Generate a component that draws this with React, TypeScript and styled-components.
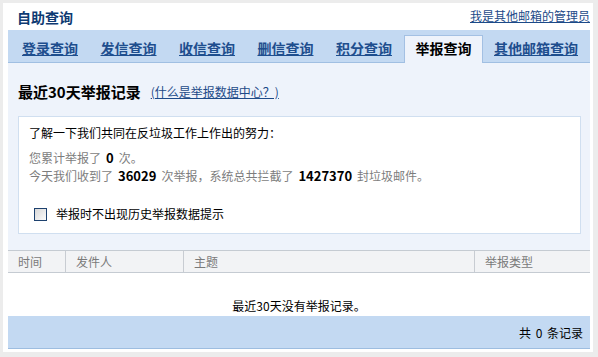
import React from 'react';
import styled, { createGlobalStyle } from 'styled-components';

const GlobalStyle = createGlobalStyle`
  html, body {
    margin: 0;
    padding: 0;
    background: #ececec;
  }
  body {
    font-family: "Noto Sans CJK SC", "Liberation Sans", sans-serif;
    font-size: 12px;
    color: #000;
  }
`;

const Page = styled.div`
  width: 598px;
  height: 357px;
  padding: 3px 5px 5px 3px;
  box-sizing: border-box;
`;

const Panel = styled.div`
  width: 590px;
  height: 349px;
  background: #fff;
  padding: 0 3px 3px 5px;
  box-sizing: border-box;
  display: flex;
  flex-direction: column;
`;

const Header = styled.div`
  height: 27px;
  display: flex;
  align-items: center;
  justify-content: space-between;
  padding-left: 9px;
  .title {
    font-size: 14px;
    font-weight: bold;
    color: #0e3a72;
  }
  a {
    color: #1c4a88;
    text-decoration: underline;
    font-size: 12px;
    margin-top: -2px;
  }
`;

const TabBar = styled.div`
  height: 33px;
  box-sizing: border-box;
  background: #c3d9f2;
  border-bottom: 1px solid #a0bfe2;
  display: flex;
  align-items: flex-end;
  padding-left: 3px;
`;

const Tab = styled.a<{ $active?: boolean }>`
  height: 28px;
  box-sizing: border-box;
  margin-bottom: -1px;
  padding: ${(p) => (p.$active ? '0 10px 0 11px' : '1px 11px 0')};
  margin-right: 0.5px;
  line-height: 25px;
  font-size: 14px;
  font-weight: bold;
  white-space: nowrap;
  color: ${(p) => (p.$active ? '#000' : '#1e4e8e')};
  text-decoration: ${(p) => (p.$active ? 'none' : 'underline')};
  background: ${(p) => (p.$active ? '#eef3fb' : 'transparent')};
  border: ${(p) => (p.$active ? '1px solid #a3c0e3' : 'none')};
  border-bottom: none;
`;

const Content = styled.div`
  background: #eef3fb;
  padding: 19px 9px 16px 10px;
`;

const SectionHead = styled.div`
  display: flex;
  align-items: center;
  gap: 10px;
  line-height: 20px;
  .heading {
    font-size: 15px;
    font-weight: bold;
  }
  a {
    color: #1c4a88;
    text-decoration: underline;
    font-size: 12px;
  }
`;

const InfoBox = styled.div`
  margin-top: 14px;
  height: 118px;
  box-sizing: border-box;
  background: #fff;
  border: 1px solid #d0dff0;
  padding: 8px 10px 0;
  .intro {
    line-height: 16px;
    font-size: 12px;
  }
  .stats {
    margin-top: 8px;
    line-height: 18px;
    color: #7d7d7d;
    b {
      color: #000;
      font-size: 13px;
      margin: 0 5px;
    }
  }
`;

const CheckRow = styled.label`
  display: flex;
  align-items: center;
  gap: 9px;
  margin-top: 20px;
  margin-left: 5px;
  line-height: 18px;
  input {
    appearance: none;
    margin: 0;
    width: 13px;
    height: 13px;
    border: 1px solid #1d416e;
    background: linear-gradient(135deg, #d8d8d8, #fbfbfb);
    box-sizing: border-box;
  }
`;

const Table = styled.div`
  display: flex;
  flex-direction: column;
`;

const HeadRow = styled.div`
  display: grid;
  grid-template-columns: 58px 118px 291px 1fr;
  height: 23px;
  box-sizing: border-box;
  background: #f2f3f5;
  border-top: 1px solid #c5cbd2;
  border-bottom: 1px solid #c5cbd2;
`;

const HeadCell = styled.div<{ $last?: boolean }>`
  padding-left: 10px;
  line-height: 21px;
  color: #7a7a7a;
  border-right: ${(p) => (p.$last ? 'none' : '1px solid #c8ccd2')};
`;

const EmptyRow = styled.div`
  height: 43px;
  box-sizing: border-box;
  padding-top: 24px;
  line-height: 18px;
  text-align: center;
`;

const Footer = styled.div`
  height: 33px;
  box-sizing: border-box;
  background: #c3d9f2;
  border-bottom: 1px solid #9dbde0;
  display: flex;
  align-items: center;
  justify-content: flex-end;
  padding-right: 7px;
  word-spacing: 2px;
`;

const tabs = ['登录查询', '发信查询', '收信查询', '删信查询', '积分查询', '举报查询', '其他邮箱查询'];

const App = () => {
  return (
    <Page>
      <GlobalStyle />
      <Panel>
        <Header>
          <div className="title">自助查询</div>
          <a>我是其他邮箱的管理员</a>
        </Header>
        <TabBar>
          {tabs.map((t) => (
            <Tab key={t} $active={t === '举报查询'}>
              {t}
            </Tab>
          ))}
        </TabBar>
        <Content>
          <SectionHead>
            <span className="heading">最近30天举报记录</span>
            <a>(什么是举报数据中心？)</a>
          </SectionHead>
          <InfoBox>
            <div className="intro">了解一下我们共同在反垃圾工作上作出的努力：</div>
            <div className="stats">
              <div>
                您累计举报了<b>0</b>次。
              </div>
              <div>
                今天我们收到了<b>36029</b>次举报，系统总共拦截了<b>1427370</b>封垃圾邮件。
              </div>
            </div>
            <CheckRow>
              <input type="checkbox" />
              <span>举报时不出现历史举报数据提示</span>
            </CheckRow>
          </InfoBox>
        </Content>
        <Table>
          <HeadRow>
            <HeadCell>时间</HeadCell>
            <HeadCell>发件人</HeadCell>
            <HeadCell>主题</HeadCell>
            <HeadCell $last>举报类型</HeadCell>
          </HeadRow>
          <EmptyRow>最近30天没有举报记录。</EmptyRow>
        </Table>
        <Footer>共 0 条记录</Footer>
      </Panel>
    </Page>
  );
};

export default App;
